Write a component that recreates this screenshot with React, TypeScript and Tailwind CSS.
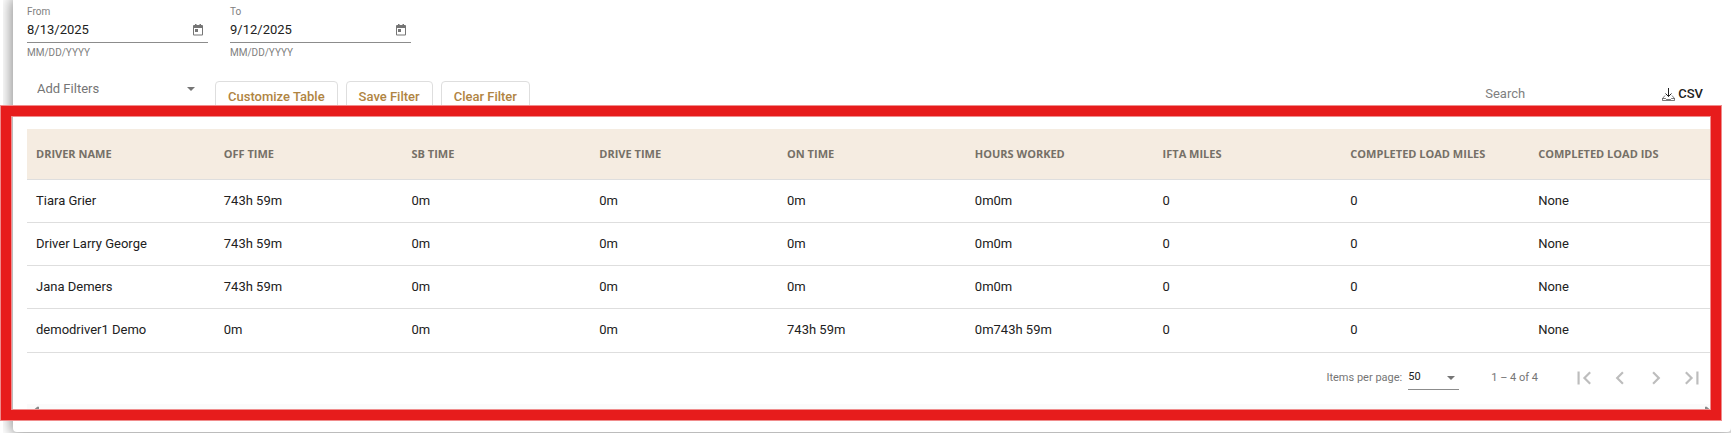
const COLUMNS = [
  "DRIVER NAME",
  "OFF TIME",
  "SB TIME",
  "DRIVE TIME",
  "ON TIME",
  "HOURS WORKED",
  "IFTA MILES",
  "COMPLETED LOAD MILES",
  "COMPLETED LOAD IDS",
];

const ROWS = [
  ["Tiara Grier", "743h 59m", "0m", "0m", "0m", "0m0m", "0", "0", "None"],
  ["Driver Larry George", "743h 59m", "0m", "0m", "0m", "0m0m", "0", "0", "None"],
  ["Jana Demers", "743h 59m", "0m", "0m", "0m", "0m0m", "0", "0", "None"],
  ["demodriver1 Demo", "0m", "0m", "0m", "743h 59m", "0m743h 59m", "0", "0", "None"],
];

const PAGE_BUTTONS = [
  { label: "First page", path: "M18.41 16.59L13.82 12l4.59-4.59L17 6l-6 6 6 6zM6 6h2v12H6z" },
  { label: "Previous page", path: "M15.41 7.41L14 6l-6 6 6 6 1.41-1.41L10.83 12z" },
  { label: "Next page", path: "M10 6L8.59 7.41 13.17 12l-4.58 4.59L10 18l6-6z" },
  { label: "Last page", path: "M5.59 7.41L10.18 12l-4.59 4.59L7 18l6-6-6-6zM16 6h2v12h-2z" },
];

function DateField({ id, label, value }: { id: string; label: string; value: string }) {
  return (
    <div className="w-[181px]">
      <label htmlFor={id} className="block text-[10px] leading-4 text-[#808080]">
        {label}
      </label>
      <div className="flex items-center border-b border-[#8c8c8c] pb-[3px]">
        <input
          id={id}
          type="text"
          defaultValue={value}
          className="h-[19px] min-w-0 flex-1 bg-transparent text-[13px] text-[#212121] outline-none"
        />
        <button type="button" aria-label={`Open ${label} calendar`} className="mr-1 text-[#757575]">
          <svg viewBox="0 0 12 12" className="size-3" fill="currentColor">
            <path
              fillRule="evenodd"
              d="M2 1h1V0h1.500v1h3V0H9v1h1a1 1 0 0 1 1 1v8.500a1 1 0 0 1-1 1H2a1 1 0 0 1-1-1V2a1 1 0 0 1 1-1zm0 3v6.500h8V4z"
            />
            <path d="M3 5h3v3H3z" />
          </svg>
        </button>
      </div>
      <p className="mt-0.5 text-[10px] leading-4 text-[#808080]">MM/DD/YYYY</p>
    </div>
  );
}

function Caret() {
  return (
    <svg viewBox="0 0 8 4" className="pointer-events-none -ml-3 h-1 w-2 shrink-0" fill="#757575">
      <path d="M0 0h8L4 4z" />
    </svg>
  );
}

function OutlineButton({ children }: { children: string }) {
  return (
    <button
      type="button"
      className="h-8 rounded border border-[#dedede] px-3 text-[13px] font-medium whitespace-nowrap text-[#b08442]"
    >
      {children}
    </button>
  );
}

function Toolbar() {
  return (
    <div className="mt-3 flex items-start">
      <div className="flex w-[172px] items-center pl-2.5">
        <select
          aria-label="Add Filters"
          className="h-8 w-full appearance-none bg-transparent text-[13px] text-[#757575] outline-none"
        >
          <option>Add Filters</option>
        </select>
        <Caret />
      </div>
      <div className="mt-2 ml-4 flex gap-2">
        <OutlineButton>Customize Table</OutlineButton>
        <OutlineButton>Save Filter</OutlineButton>
        <OutlineButton>Clear Filter</OutlineButton>
      </div>
      <div className="mt-1.5 mr-3.5 ml-auto flex h-[30px] items-center">
        <input
          type="search"
          aria-label="Search"
          placeholder="Search"
          className="w-[177px] bg-transparent text-[13px] outline-none placeholder:text-[#808080]"
        />
        <button type="button" className="flex items-center gap-[3px] text-[13px] font-medium text-[#212121]">
          <svg viewBox="0 0 13 13" className="size-[13px]" fill="none" stroke="currentColor">
            <path d="M6.500 0v8.500M3.500 5.500l3 3 3-3" />
            <path d="M3 7.500L.5 10.500v2h12v-2L10 7.500M.5 10.500h3l1 1h4l1-1h3" strokeWidth=".6" />
          </svg>
          CSV
        </button>
      </div>
    </div>
  );
}

function DriverTable() {
  return (
    <table className="mt-4 w-full table-fixed border-collapse text-left">
      <thead>
        <tr className="h-[50px] border-b border-[#dedede] bg-[#f5ece1]">
          {COLUMNS.map((column) => (
            <th
              key={column}
              className="px-[9px] font-['Open_Sans',sans-serif] text-[11px] font-bold whitespace-nowrap text-[#757067]"
            >
              {column}
            </th>
          ))}
        </tr>
      </thead>
      <tbody>
        {ROWS.map((row) => (
          <tr key={row[0]} className="h-[43px] border-b border-[#dedede] last:h-11">
            {row.map((cell, i) => (
              <td key={COLUMNS[i]} className="px-[9px] text-[13px] whitespace-nowrap text-[#212121]">
                {cell}
              </td>
            ))}
          </tr>
        ))}
      </tbody>
    </table>
  );
}

function Paginator() {
  return (
    <div className="flex h-[51px] items-center justify-end pr-[7px] text-[11px] text-[#757575]">
      <label htmlFor="page-size">Items per page:</label>
      <div className="ml-1.5 flex w-[51px] items-center border-b border-[#8c8c8c]">
        <select id="page-size" className="h-[22px] w-full appearance-none bg-transparent text-[#212121] outline-none">
          <option>50</option>
        </select>
        <Caret />
      </div>
      <span className="mr-7 ml-8">1 – 4 of 4</span>
      {PAGE_BUTTONS.map(({ label, path }) => (
        <button
          key={label}
          type="button"
          aria-label={label}
          disabled
          className="flex size-9 items-center justify-center text-[#bdbdbd]"
        >
          <svg viewBox="0 0 24 24" className="size-[26px]" fill="currentColor">
            <path d={path} />
          </svg>
        </button>
      ))}
    </div>
  );
}

function ScrollTrack() {
  return (
    <div className="flex h-[17px] items-center justify-between bg-[#fbfbfb] px-1">
      <svg viewBox="0 0 8 12" className="h-3 w-2" fill="#8a8a8a">
        <path d="M8 1v10q-1 1-2 0L0 6l6-5q1-1 2 0z" />
      </svg>
      <svg viewBox="0 0 8 12" className="h-3 w-2" fill="#8a8a8a">
        <path d="M0 1v10q1 1 2 0l6-5-6-5q-1-1-2 0z" />
      </svg>
    </div>
  );
}

export default function App() {
  return (
    <div className="relative overflow-hidden bg-white pl-[3px] font-[Roboto,sans-serif]">
      <div className="overflow-hidden pb-px pl-2.5">
        <main className="rounded-b bg-white px-3.5 pt-1 pb-[11px] shadow-[0_0_14px_2px_rgba(0,0,0,0.45)]">
          <div className="flex gap-[22px]">
            <DateField id="from" label="From" value="8/13/2025" />
            <DateField id="to" label="To" value="9/12/2025" />
          </div>
          <Toolbar />
          <DriverTable />
          <Paginator />
          <ScrollTrack />
        </main>
      </div>
      {/* highlight frame around the report table */}
      <div className="pointer-events-none absolute top-[106px] right-2.5 bottom-[13px] left-px border-10 border-[#e71c1c] shadow-[0_0_0_1px_#f08c8c,inset_0_0_0_1px_#f08c8c]" />
    </div>
  );
}
